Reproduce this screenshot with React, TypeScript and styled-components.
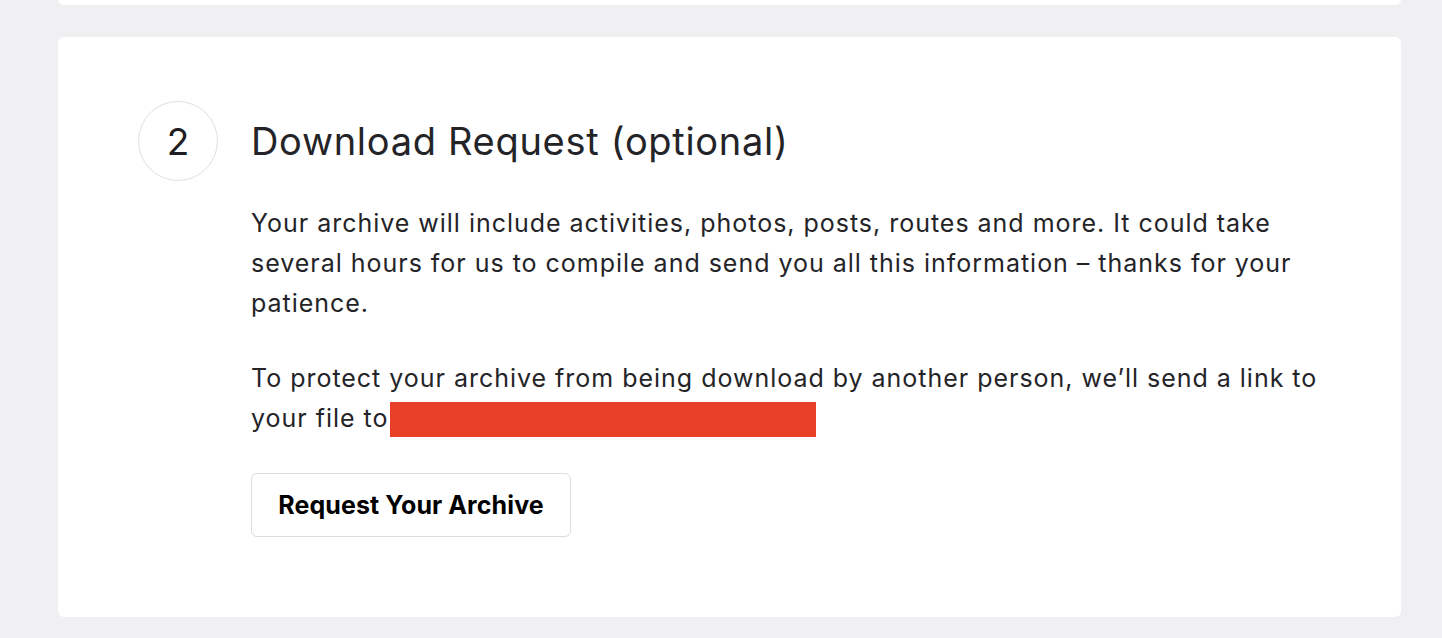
import React from "react";
import styled, { createGlobalStyle } from "styled-components";

const Global = createGlobalStyle`
  html, body { margin: 0; padding: 0; background: #f0f0f3; }
  body { font-family: Inter, "Noto Sans", sans-serif; color: #242428; }
`;

const Page = styled.div`
  display: flex;
  flex-direction: column;
  gap: 32px;
  padding: 0 41px 21px 58px;
`;

const PrevCard = styled.div`
  height: 5px;
  background: #ffffff;
  border-radius: 0 0 6px 6px;
`;

const Card = styled.section`
  background: #ffffff;
  border-radius: 6px;
  padding: 64px 80px 80px 80px;
`;

const Header = styled.div`
  display: flex;
  align-items: center;
  gap: 33px;
`;

const StepCircle = styled.div`
  width: 78px;
  height: 78px;
  flex: none;
  border: 1px solid #dfdfe5;
  border-radius: 50%;
  display: flex;
  align-items: center;
  justify-content: center;
  font-size: 37px;
  font-weight: 400;
  color: #1e1e22;
`;

const Title = styled.h2`
  margin: 0;
  font-size: 38px;
  font-weight: 400;
  letter-spacing: 0.7px;
  line-height: 46px;
  color: #242428;
`;

const Body = styled.div`
  margin-left: 113px;
  padding-top: 22px;
`;

const Paragraph = styled.p`
  margin: 0 0 35px 0;
  font-size: 25px;
  letter-spacing: 0.98px;
  line-height: 40px;
  color: #242428;
`;

const Redacted = styled.span`
  display: inline-block;
  width: 426px;
  height: 35px;
  background: #e84026;
  vertical-align: -10px;
  margin-left: 2px;
`;

const Button = styled.button`
  width: 320px;
  height: 64px;
  background: #ffffff;
  border: 1px solid #dcdce2;
  border-radius: 6px;
  font-family: Inter, "Noto Sans", sans-serif;
  font-size: 25px;
  font-weight: 700;
  letter-spacing: 0.1px;
  color: #000000;
  cursor: pointer;
`;

export default function App() {
  return (
    <>
      <Global />
      <Page>
        <PrevCard />
        <Card>
          <Header>
            <StepCircle>2</StepCircle>
            <Title>Download Request (optional)</Title>
          </Header>
          <Body>
            <Paragraph>
              Your archive will include activities, photos, posts, routes and more. It could take
              several hours for us to compile and send you all this information – thanks for your
              patience.
            </Paragraph>
            <Paragraph>
              To protect your archive from being download by another person, we’ll send a link to
              your file to<Redacted />
            </Paragraph>
            <Button>Request Your Archive</Button>
          </Body>
        </Card>
      </Page>
    </>
  );
}
